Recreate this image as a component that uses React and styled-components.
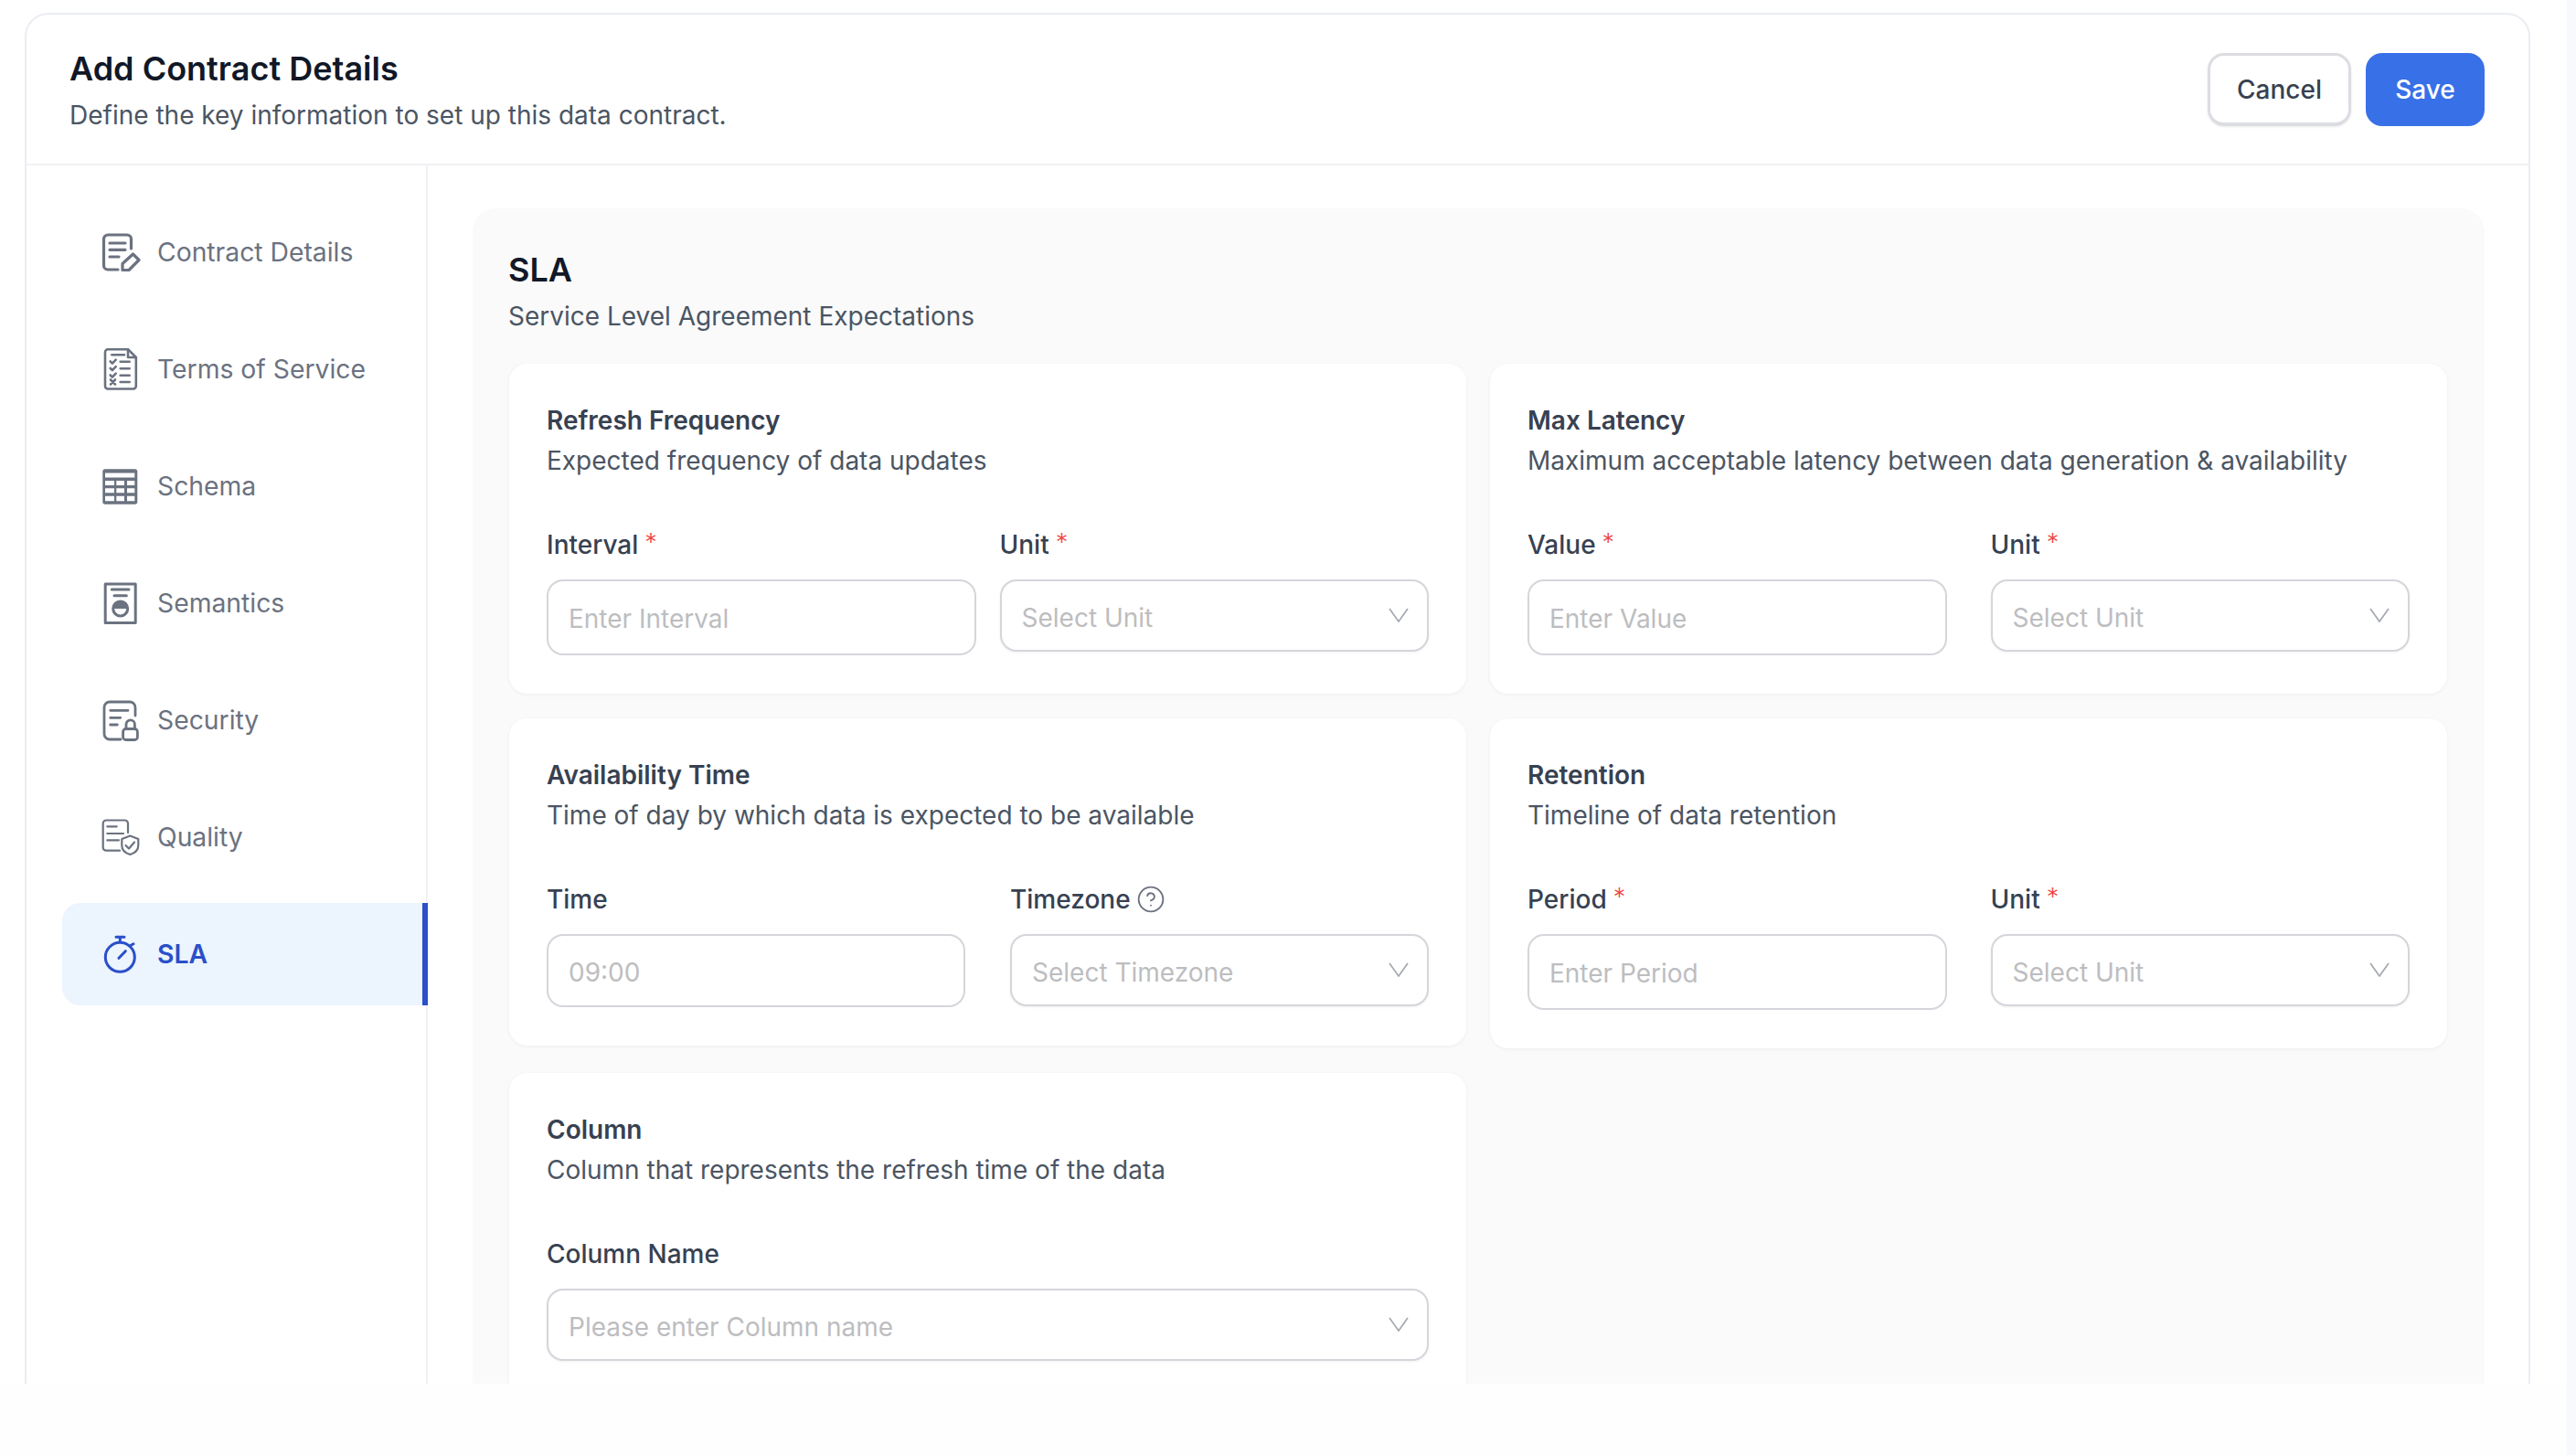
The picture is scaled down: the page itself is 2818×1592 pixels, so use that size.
import React from 'react';
import styled, { createGlobalStyle } from 'styled-components';
import { CircleHelp } from 'lucide-react';

const GlobalStyle = createGlobalStyle`
  * { box-sizing: border-box; }
  html, body { margin: 0; padding: 0; background: #fff; }
  body { font-family: Inter, "Noto Sans", sans-serif; }
`;

const Page = styled.div`
  display: flex;
  width: 2818px;
  height: 1592px;
  overflow: hidden;
  background: #fefefe;
`;

const Viewport = styled.div`
  flex: 1;
  height: 1514px;
  overflow: hidden;
  padding: 14px 40px 0 27px;
  background: #fff;
`;

const EdgeStrip = styled.div`
  width: 10px;
  background: #f8f9fd;
`;

const Shell = styled.div`
  border: 2px solid #eaedf3;
  border-radius: 26px 26px 0 0;
  background: #fff;
  min-height: 1600px;
`;

const Header = styled.header`
  height: 165px;
  display: flex;
  align-items: center;
  justify-content: space-between;
  padding: 0 48px 0 47px;
  border-bottom: 2px solid #f0f1f4;
`;

const HeaderText = styled.div`
  display: flex;
  flex-direction: column;
  gap: 9px;
  padding-top: 3px;
`;

const PageTitle = styled.h1`
  margin: 0;
  font-size: 36px;
  line-height: 44px;
  font-weight: 600;
  color: #111827;
`;

const Subtitle = styled.p`
  margin: 0;
  font-size: 28px;
  line-height: 40px;
  font-weight: 400;
  color: #4b5563;
`;

const Actions = styled.div`
  display: flex;
  gap: 16px;
`;

const CancelButton = styled.button`
  width: 157px;
  height: 80px;
  padding: 2px 0 0;
  border: 3px solid #dcdde2;
  border-bottom-width: 4px;
  border-radius: 18px;
  background: #fff;
  font: 550 28px Inter, sans-serif;
  color: #374151;
  box-shadow: 0 1px 3px rgba(0, 0, 0, 0.08);
`;

const SaveButton = styled.button`
  width: 130px;
  height: 80px;
  padding: 0;
  border: 0;
  border-radius: 18px;
  background: #3870e8;
  font: 550 28px Inter, sans-serif;
  color: #fff;
`;

const Body = styled.div`
  display: flex;
  align-items: flex-start;
`;

const Sidebar = styled.nav`
  flex: 0 0 439px;
  align-self: stretch;
  min-height: 1400px;
  padding: 39px 0 0 39px;
  border-right: 2px solid #f0f1f4;
  display: flex;
  flex-direction: column;
  gap: 16px;
`;

const NavItem = styled.a`
  display: flex;
  align-items: center;
  gap: 18px;
  height: 112px;
  margin-right: ${({ $active }) => ($active ? '-2px' : '0')};
  padding-left: 42px;
  border-radius: 20px 0 0 20px;
  border-right: ${({ $active }) => ($active ? '6px solid #2a4fc9' : '0')};
  background: ${({ $active }) => ($active ? '#ecf4fe' : 'transparent')};
  color: ${({ $active }) => ($active ? '#2a4fc9' : '#6b7280')};
  font-size: 28.3px;
  font-weight: ${({ $active }) => ($active ? 600 : 400)};
  line-height: 40px;
`;

const NavIcon = styled.svg`
  flex: none;
  width: 44px;
  height: 48px;
  fill: none;
  stroke: currentColor;
  stroke-linecap: round;
  stroke-linejoin: round;
`;

const Content = styled.main`
  flex: 1;
  min-width: 0;
  padding: 47px 48px 0 49px;
`;

const Panel = styled.section`
  padding: 45px 41px 40px 40px;
  border-radius: 26px 26px 0 0;
  background: #fafafa;
`;

const PanelHeading = styled.div`
  margin-left: -1px;
`;

const PanelTitle = styled.h2`
  margin: 0;
  font-size: 36px;
  line-height: 44px;
  font-weight: 600;
  color: #111827;
`;

const PanelSubtitle = styled.p`
  margin: 9px 0 32px;
  font-size: 28px;
  line-height: 40px;
  color: #4b5563;
`;

const CardGrid = styled.div`
  display: grid;
  grid-template-columns: 1fr 1fr;
  gap: 27px 26px;
  align-items: start;
`;

const Card = styled.article`
  padding: 44px 41px 42px;
  border-radius: 20px;
  background: #fff;
  box-shadow: 0 1px 4px rgba(17, 24, 39, 0.05);
`;

const CardTitle = styled.h3`
  margin: 0;
  font-size: 28px;
  line-height: 36px;
  font-weight: 600;
  color: #374151;
`;

const CardText = styled.p`
  margin: 8px 0 56px;
  font-size: 28px;
  line-height: 36px;
  color: #4b5563;
`;

const Fields = styled.div`
  display: grid;
  grid-template-columns: ${({ $single }) => ($single ? '1fr' : '1fr 1fr')};
  column-gap: ${({ $gap }) => $gap || 26}px;
  align-items: start;
`;

const Field = styled.div`
  min-width: 0;
`;

const Label = styled.label`
  display: flex;
  align-items: center;
  gap: 7px;
  height: 36px;
  margin-bottom: 20px;
  font-size: 28px;
  font-weight: 500;
  color: #374151;
`;

const Required = styled.span`
  align-self: flex-start;
  margin-top: -2px;
  font-size: 27px;
  line-height: 36px;
  font-weight: 300;
  color: #ef4444;
`;

const TextInput = styled.input`
  display: block;
  width: 100%;
  height: ${({ $h }) => $h || 83}px;
  padding: 3px 22px 0;
  border: 2.5px solid #d5d5db;
  border-radius: 18px;
  outline: 0;
  background: #fff;
  font: 400 28px Inter, sans-serif;
  color: #374151;

  &::placeholder {
    color: #bdbdc0;
    opacity: 1;
  }
`;

const SelectBox = styled.div`
  display: flex;
  align-items: center;
  justify-content: space-between;
  height: 79px;
  padding: 0 20px 0 22px;
  border: 2.5px solid #d5d5db;
  border-radius: 18px;
  background: #fff;
  box-shadow: 0 1px 3px rgba(0, 0, 0, 0.06);
  font-size: 28px;
  color: #bdbdc0;
`;

const SelectText = styled.span`
  padding-top: 4px;
`;

const Chevron = styled.svg`
  width: 22px;
  height: 16px;
  margin-top: -2px;
  fill: none;
  stroke: #a3a8b0;
  stroke-width: 1.7;
`;

const HelpIcon = styled(CircleHelp)`
  color: #6b7280;
  margin-left: -1px;
`;

const icons = {
  contract: (
    <NavIcon viewBox="0 0 44 48" strokeWidth="3.2">
      <path d="M33.5 20V9.5a4.5 4.5 0 0 0-4.5-4.5H8a4.5 4.5 0 0 0-4.5 4.5V38.5A4.5 4.5 0 0 0 8 43h11" />
      <path d="M10 14h17M10 21.3h17M10 29h10" />
      <path d="M24 36.5 35.5 26l6.5 6.5L31 43.5h-7z" />
    </NavIcon>
  ),
  terms: (
    <NavIcon viewBox="0 0 44 48" strokeWidth="2.6">
      <path d="M30 2.2H8A3 3 0 0 0 5 5.2v37.3a3 3 0 0 0 3 3h27.8a3 3 0 0 0 3-3V11z" />
      <path d="M30 2.2V11h8.8" />
      <path d="M12.3 8.3H26M21.7 15.7h10M21.7 23.3h10M21.7 30.7h10M21.7 38h10" />
      <path d="M10.7 15.5l2.2 2.2 3.8-4M10.7 23l2.2 2.2 3.8-4M10.7 30.5l2.2 2.2 3.8-4M11 35.5l5 5M16 35.5l-5 5" />
    </NavIcon>
  ),
  schema: (
    <NavIcon viewBox="0 0 44 48" stroke="none">
      <path
        fill="currentColor"
        fillRule="evenodd"
        stroke="none"
        d="M5 5.3h32.6a2.7 2.7 0 0 1 2.7 2.7v33a2.7 2.7 0 0 1-2.7 2.7H5A2.7 2.7 0 0 1 2.3 41V8A2.7 2.7 0 0 1 5 5.3zM5 9.5v5h32.3v-5zM5 18v5h10v-5zM17.3 18v5H26v-5zM29 18v5h8.3v-5zM5 26.3v5h10v-5zM17.3 26.3v5H26v-5zM29 26.3v5h8.3v-5zM5 34.7v5.6h10v-5.6zM17.3 34.7v5.6H26v-5.6zM29 34.7v5.6h8.3v-5.6z"
      />
    </NavIcon>
  ),
  semantics: (
    <NavIcon viewBox="0 0 44 48" strokeWidth="3" strokeLinecap="butt" strokeLinejoin="miter">
      <rect x="5.2" y="3" width="33" height="42.4" />
      <path d="M12.3 9h18.7M15 15.7h13.3" />
      <circle cx="21.7" cy="30" r="8" />
      <path fill="currentColor" stroke="none" d="M21.7 30h8a8 8 0 0 0-16 0z" />
    </NavIcon>
  ),
  security: (
    <NavIcon viewBox="0 0 44 48" strokeWidth="2.8">
      <path d="M38 19V10a6 6 0 0 0-6-6H10a6 6 0 0 0-6 6v29a6 6 0 0 0 6 6h12" />
      <path d="M10.7 13.3H30M10.7 21.3h11M10.7 29h7.6" />
      <rect x="24.6" y="33.5" width="15.8" height="12" rx="3" />
      <path d="M28 33v-4.5a4.7 4.7 0 0 1 9.4 0V33" />
    </NavIcon>
  ),
  quality: (
    <NavIcon viewBox="0 0 44 48" strokeWidth="2.2">
      <path d="M30 19V9a3.5 3.5 0 0 0-3.5-3.5H6.2A3.5 3.5 0 0 0 2.7 9v26.2a3.5 3.5 0 0 0 3.5 3.5H21" />
      <path d="M7.3 12.3h10.4M7.3 20H25M7.3 27.3H20" />
      <path d="M32.3 22.5 41.3 26v7c0 5-4 8.5-9 10-5-1.5-9-5-9-10v-7z" />
      <path d="M27.5 33l3.5 3.5 6-7" />
    </NavIcon>
  ),
  sla: (
    <NavIcon viewBox="0 0 44 48" strokeWidth="3">
      <circle cx="21.3" cy="27.3" r="16" />
      <path d="M17 5.3h9M21.3 5.3v5M32 15l4-2.3M20 28.3l7.3-7.6" />
    </NavIcon>
  ),
};

const navItems = [
  { key: 'contract', label: 'Contract Details' },
  { key: 'terms', label: 'Terms of Service' },
  { key: 'schema', label: 'Schema' },
  { key: 'semantics', label: 'Semantics' },
  { key: 'security', label: 'Security' },
  { key: 'quality', label: 'Quality' },
  { key: 'sla', label: 'SLA', active: true },
];

function Select({ placeholder }) {
  return (
    <SelectBox>
      <SelectText>{placeholder}</SelectText>
      <Chevron viewBox="0 0 22 16">
        <polyline points="1,1 11,15 21,1" />
      </Chevron>
    </SelectBox>
  );
}

function FieldLabel({ children, required }) {
  return (
    <Label>
      {children}
      {required && <Required>*</Required>}
    </Label>
  );
}

export default function App() {
  return (
    <>
      <GlobalStyle />
      <Page>
        <Viewport>
          <Shell>
            <Header>
              <HeaderText>
                <PageTitle>Add Contract Details</PageTitle>
                <Subtitle>Define the key information to set up this data contract.</Subtitle>
              </HeaderText>
              <Actions>
                <CancelButton>Cancel</CancelButton>
                <SaveButton>Save</SaveButton>
              </Actions>
            </Header>
            <Body>
              <Sidebar>
                {navItems.map((item) => (
                  <NavItem key={item.key} $active={item.active}>
                    {icons[item.key]}
                    {item.label}
                  </NavItem>
                ))}
              </Sidebar>
              <Content>
                <Panel>
                  <PanelHeading>
                    <PanelTitle>SLA</PanelTitle>
                    <PanelSubtitle>Service Level Agreement Expectations</PanelSubtitle>
                  </PanelHeading>
                  <CardGrid>
                    <Card>
                      <CardTitle>Refresh Frequency</CardTitle>
                      <CardText>Expected frequency of data updates</CardText>
                      <Fields>
                        <Field>
                          <FieldLabel required>Interval</FieldLabel>
                          <TextInput placeholder="Enter Interval" />
                        </Field>
                        <Field>
                          <FieldLabel required>Unit</FieldLabel>
                          <Select placeholder="Select Unit" />
                        </Field>
                      </Fields>
                    </Card>
                    <Card>
                      <CardTitle>Max Latency</CardTitle>
                      <CardText>Maximum acceptable latency between data generation &amp; availability</CardText>
                      <Fields $gap={48}>
                        <Field>
                          <FieldLabel required>Value</FieldLabel>
                          <TextInput placeholder="Enter Value" />
                        </Field>
                        <Field>
                          <FieldLabel required>Unit</FieldLabel>
                          <Select placeholder="Select Unit" />
                        </Field>
                      </Fields>
                    </Card>
                    <Card>
                      <CardTitle>Availability Time</CardTitle>
                      <CardText>Time of day by which data is expected to be available</CardText>
                      <Fields $gap={49}>
                        <Field>
                          <FieldLabel>Time</FieldLabel>
                          <TextInput $h={80} placeholder="09:00" />
                        </Field>
                        <Field>
                          <Label>
                            Timezone
                            <HelpIcon size={32} strokeWidth={1.4} />
                          </Label>
                          <Select placeholder="Select Timezone" />
                        </Field>
                      </Fields>
                    </Card>
                    <Card>
                      <CardTitle>Retention</CardTitle>
                      <CardText>Timeline of data retention</CardText>
                      <Fields $gap={48}>
                        <Field>
                          <FieldLabel required>Period</FieldLabel>
                          <TextInput placeholder="Enter Period" />
                        </Field>
                        <Field>
                          <FieldLabel required>Unit</FieldLabel>
                          <Select placeholder="Select Unit" />
                        </Field>
                      </Fields>
                    </Card>
                    <Card>
                      <CardTitle>Column</CardTitle>
                      <CardText>Column that represents the refresh time of the data</CardText>
                      <Fields $single>
                        <Field>
                          <FieldLabel>Column Name</FieldLabel>
                          <Select placeholder="Please enter Column name" />
                        </Field>
                      </Fields>
                    </Card>
                  </CardGrid>
                </Panel>
              </Content>
            </Body>
          </Shell>
        </Viewport>
        <EdgeStrip />
      </Page>
    </>
  );
}
